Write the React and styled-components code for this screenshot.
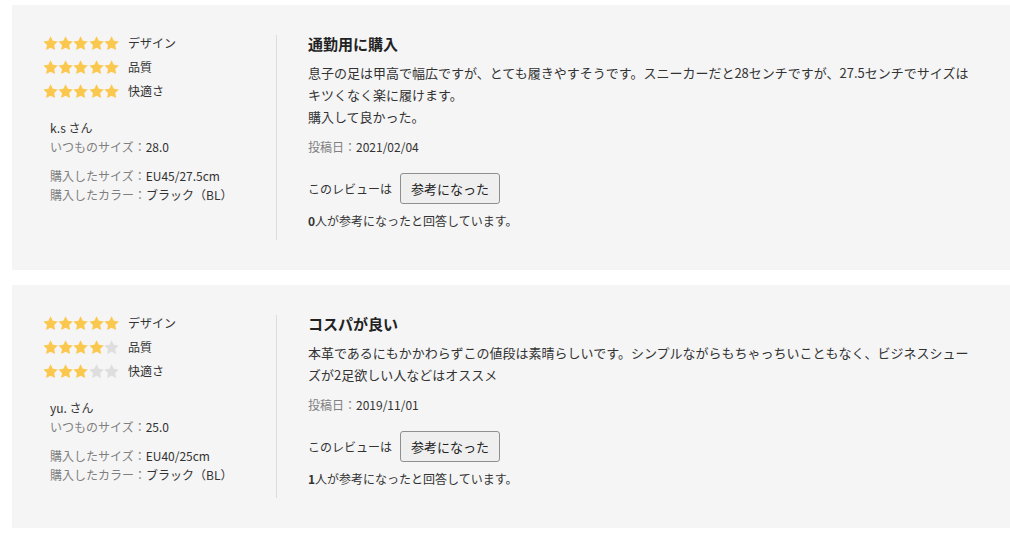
import styled, { createGlobalStyle } from "styled-components";

//Global :

const GlobalStyle = createGlobalStyle`
  body {
    margin: 0;
    background: #fff;
    font-family: "Noto Sans CJK JP", "Liberation Sans", sans-serif;
    color: #333;
  }
`;

//Style Components :

const Page = styled.div`
  padding: 5px 0 0 12px;
  display: flex;
  flex-direction: column;
  gap: 15px;
`;

const Card = styled.section`
  background: #f5f5f5;
  display: flex;
  padding: 30px 32px 30px 31px;
`;

const Side = styled.div`
  width: 233px;
  flex-shrink: 0;
  border-right: 1px solid #dcdcdc;
`;

const RatingList = styled.div`
  display: flex;
  flex-direction: column;
  gap: 8px;
`;

const RatingRow = styled.div`
  display: flex;
  align-items: center;
  height: 16px;
  gap: 9px;
`;

const Stars = styled.div`
  display: flex;
  width: 76px;
`;

const RatingLabel = styled.span`
  font-size: 12px;
  line-height: 16px;
  color: #333;
`;

const Info = styled.div`
  padding-left: 7px;
  margin-top: ${(p) => (p.$first ? "19px" : "10px")};
  font-size: 12px;
  line-height: 19px;
`;

const Line = styled.div`
  color: #333;
`;

const Muted = styled.span`
  color: #808080;
`;

const Main = styled.div`
  flex: 1;
  padding: 0 6px 10px 31px;
`;

const Title = styled.h3`
  margin: 0;
  font-size: 15px;
  line-height: 18px;
  font-weight: 700;
  color: #222;
`;

const Body = styled.p`
  margin: 9px 0 0;
  font-size: 13px;
  line-height: 22px;
  color: #333;
  white-space: pre-line;
`;

const Posted = styled.div`
  margin-top: 10px;
  font-size: 12px;
  line-height: 18px;
  color: #333;
`;

const Helpful = styled.div`
  margin-top: 17px;
  display: flex;
  align-items: center;
  gap: 8px;
  font-size: 12px;
  color: #333;
`;

const HelpButton = styled.button`
  height: 31px;
  padding: 0 10px;
  font-family: inherit;
  font-size: 13px;
  color: #222;
  background: #efefef;
  border: 1px solid #8f8f8f;
  border-radius: 3px;
  cursor: pointer;
`;

const Count = styled.div`
  margin-top: 8px;
  font-size: 12px;
  line-height: 18px;
  color: #333;

  b {
    font-weight: 700;
  }
`;

//Components :

function Star({ on }) {
  return (
    <svg width="15.2" height="15" viewBox="1.2 1.2 21.6 21.6">
      <path
        d="M12 1.6l3.2 6.6 7.2 1-5.2 5.1 1.25 7.2L12 18.1l-6.45 3.4 1.25-7.2L1.6 9.2l7.2-1z"
        fill={on ? "#fbc84f" : "#dedede"}
      />
    </svg>
  );
}

function Rating({ value, label }) {
  return (
    <RatingRow>
      <Stars>
        {[1, 2, 3, 4, 5].map((n) => (
          <Star key={n} on={n <= value} />
        ))}
      </Stars>
      <RatingLabel>{label}</RatingLabel>
    </RatingRow>
  );
}

const reviews = [
  {
    id: 1,
    ratings: [5, 5, 5],
    name: "k.s さん",
    usual: "28.0",
    size: "EU45/27.5cm",
    color: "ブラック（BL）",
    title: "通勤用に購入",
    text: "息子の足は甲高で幅広ですが、とても履きやすそうです。スニーカーだと28センチですが、27.5センチでサイズはキツくなく楽に履けます。\n購入して良かった。",
    date: "2021/02/04",
    count: 0,
  },
  {
    id: 2,
    ratings: [5, 4, 3],
    name: "yu. さん",
    usual: "25.0",
    size: "EU40/25cm",
    color: "ブラック（BL）",
    title: "コスパが良い",
    text: "本革であるにもかかわらずこの値段は素晴らしいです。シンプルながらもちゃっちいこともなく、ビジネスシュー\nズが2足欲しい人などはオススメ",
    date: "2019/11/01",
    count: 1,
  },
];

const labels = ["デザイン", "品質", "快適さ"];

function ReviewCard({ review }) {
  return (
    <Card>
      <Side>
        <RatingList>
          {review.ratings.map((v, i) => (
            <Rating key={labels[i]} value={v} label={labels[i]} />
          ))}
        </RatingList>
        <Info $first>
          <Line>{review.name}</Line>
          <Line>
            <Muted>いつものサイズ：</Muted>
            {review.usual}
          </Line>
        </Info>
        <Info>
          <Line>
            <Muted>購入したサイズ：</Muted>
            {review.size}
          </Line>
          <Line>
            <Muted>購入したカラー：</Muted>
            {review.color}
          </Line>
        </Info>
      </Side>
      <Main>
        <Title>{review.title}</Title>
        <Body>{review.text}</Body>
        <Posted>
          <Muted>投稿日：</Muted>
          {review.date}
        </Posted>
        <Helpful>
          このレビューは
          <HelpButton type="button">参考になった</HelpButton>
        </Helpful>
        <Count>
          <b>{review.count}</b>人が参考になったと回答しています。
        </Count>
      </Main>
    </Card>
  );
}

export default function App() {
  return (
    <>
      <GlobalStyle />
      <Page lang="ja">
        {reviews.map((r) => (
          <ReviewCard key={r.id} review={r} />
        ))}
      </Page>
    </>
  );
}
